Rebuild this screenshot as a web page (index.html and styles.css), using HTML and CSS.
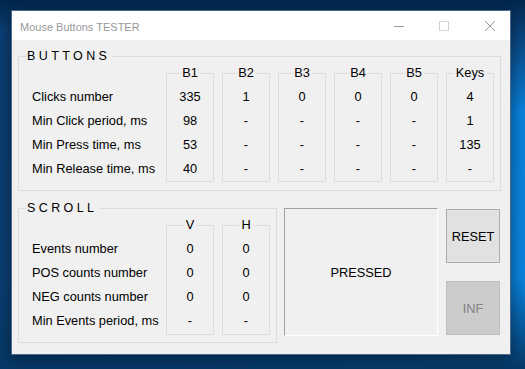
FILE: index.html
```html
<!DOCTYPE html>
<html lang="en">
    <head>
        <meta charset="UTF-8" />
        <meta name="viewport" content="width=device-width, initial-scale=1.0" />
        <title>Mouse Buttons TESTER</title>
        <link rel="stylesheet" href="styles.css">
    </head>
    <body>
        <div class="window">
            <div class="titlebar">
                <span class="caption">Mouse Buttons TESTER</span>
                <div class="controls">
                    <svg class="ctl" width="10" height="10" viewBox="0 0 10 10">
                        <line x1="0" y1="5.5" x2="10" y2="5.5" stroke="#999" stroke-width="1" />
                    </svg>
                    <svg class="ctl" width="10" height="10" viewBox="0 0 10 10">
                        <rect x="0.5" y="0.5" width="9" height="9" fill="none" stroke="#d4d4d4" stroke-width="1" />
                    </svg>
                    <svg class="ctl close" width="10" height="10" viewBox="0 0 10 10">
                        <path d="M0 0 L10 10 M10 0 L0 10" stroke="#999" stroke-width="1" />
                    </svg>
                </div>
            </div>
            <div class="client">
                <div class="group buttons">
                    <div class="group-title">BUTTONS</div>
                    <div class="table">
                        <div class="labels">
                            <div class="row">Clicks number</div>
                            <div class="row">Min Click period, ms</div>
                            <div class="row">Min Press time, ms</div>
                            <div class="row">Min Release time, ms</div>
                        </div>
                        <div class="col">
                            <div class="col-title">B1</div>
                            <div class="row">335</div>
                            <div class="row">98</div>
                            <div class="row">53</div>
                            <div class="row">40</div>
                        </div>
                        <div class="col">
                            <div class="col-title">B2</div>
                            <div class="row">1</div>
                            <div class="row">-</div>
                            <div class="row">-</div>
                            <div class="row">-</div>
                        </div>
                        <div class="col">
                            <div class="col-title">B3</div>
                            <div class="row">0</div>
                            <div class="row">-</div>
                            <div class="row">-</div>
                            <div class="row">-</div>
                        </div>
                        <div class="col">
                            <div class="col-title">B4</div>
                            <div class="row">0</div>
                            <div class="row">-</div>
                            <div class="row">-</div>
                            <div class="row">-</div>
                        </div>
                        <div class="col">
                            <div class="col-title">B5</div>
                            <div class="row">0</div>
                            <div class="row">-</div>
                            <div class="row">-</div>
                            <div class="row">-</div>
                        </div>
                        <div class="col">
                            <div class="col-title">Keys</div>
                            <div class="row">4</div>
                            <div class="row">1</div>
                            <div class="row">135</div>
                            <div class="row">-</div>
                        </div>
                    </div>
                </div>
                <div class="bottom">
                    <div class="group scroll">
                        <div class="group-title">SCROLL</div>
                        <div class="table">
                            <div class="labels">
                                <div class="row">Events number</div>
                                <div class="row">POS counts number</div>
                                <div class="row">NEG counts number</div>
                                <div class="row">Min Events period, ms</div>
                            </div>
                            <div class="col">
                                <div class="col-title">V</div>
                                <div class="row">0</div>
                                <div class="row">0</div>
                                <div class="row">0</div>
                                <div class="row">-</div>
                            </div>
                            <div class="col">
                                <div class="col-title">H</div>
                                <div class="row">0</div>
                                <div class="row">0</div>
                                <div class="row">0</div>
                                <div class="row">-</div>
                            </div>
                        </div>
                    </div>
                    <div class="pressed">PRESSED</div>
                    <div class="side">
                        <div class="btn">RESET</div>
                        <div class="btn disabled">INF</div>
                    </div>
                </div>
            </div>
        </div>
    </body>
</html>
```

FILE: styles.css
```css
html {
    height: 100%;
    overflow: hidden;
}
body {
    margin: 0;
    height: 100%;
    background:
        linear-gradient(180deg, #01264b 0%, #0a3f75 8%, transparent 30%, transparent 75%, #063866 100%),
        linear-gradient(95deg, #0a3d70 0%, #0b4f92 45%, #0a6fc4 80%, #0a86e2 100%);
    font-family: "Liberation Sans", Arial, sans-serif;
    font-size: 12.8px;
    color: #000;
}
.window {
    margin: 10px 0 0 11px;
    width: 500px;
    height: 345px;
    box-sizing: border-box;
    border: 1px solid #4d6a8c;
    background: #f0f0f0;
    box-shadow: 0 3px 14px rgba(0, 0, 0, 0.45);
    display: flex;
    flex-direction: column;
}
.titlebar {
    height: 29px;
    background: #fff;
    display: flex;
    align-items: center;
    padding: 0 15px 0 8px;
}
.caption {
    font-size: 11px;
    color: #999;
    flex: 1;
    padding-top: 2px;
}
.controls {
    display: flex;
    gap: 35px;
    align-items: center;
    padding-top: 1px;
}
.close {
    margin-left: 1px;
}
.client {
    flex: 1;
    padding: 16px 8px 0 6px;
}
.group {
    border: 1px solid #dcdcdc;
    box-sizing: border-box;
}
.group-title {
    margin: -8px 0 0 7px;
    padding: 0 2px 0 1px;
    width: fit-content;
    background: #f0f0f0;
    line-height: 14px;
    font-size: 12.5px;
    letter-spacing: 3.4px;
}
.buttons {
    width: 483px;
    height: 135px;
}
.table {
    display: flex;
    gap: 8px;
    margin: 10px 0 0 13px;
}
.labels {
    width: 126px;
    padding-top: 12px;
}
.row {
    height: 24px;
    line-height: 24px;
    white-space: nowrap;
}
.col {
    width: 48px;
    height: 109px;
    box-sizing: border-box;
    border: 1px solid #dcdcdc;
    text-align: center;
}
.col-title {
    margin: -8px auto 5px;
    padding: 0 2px;
    width: fit-content;
    background: #f0f0f0;
    line-height: 14px;
}
.bottom {
    display: flex;
    margin-top: 17px;
    gap: 7px;
}
.scroll {
    width: 259px;
    height: 135px;
}
.scroll .table {
    margin-top: 10px;
}
.scroll .col {
    height: 110px;
}
.pressed {
    width: 154px;
    height: 128px;
    box-sizing: border-box;
    border: 1px solid;
    border-color: #a0a0a0 #fff #fff #a0a0a0;
    display: flex;
    align-items: center;
    justify-content: center;
}
.side {
    margin-left: 1px;
    padding-top: 1px;
    display: flex;
    flex-direction: column;
    gap: 18px;
}
.btn {
    width: 54px;
    height: 54px;
    box-sizing: border-box;
    border: 1px solid #adadad;
    background: #e1e1e1;
    display: flex;
    align-items: center;
    justify-content: center;
}
.btn.disabled {
    background: #cccccc;
    border-color: #bfbfbf;
    color: #838383;
}
```
